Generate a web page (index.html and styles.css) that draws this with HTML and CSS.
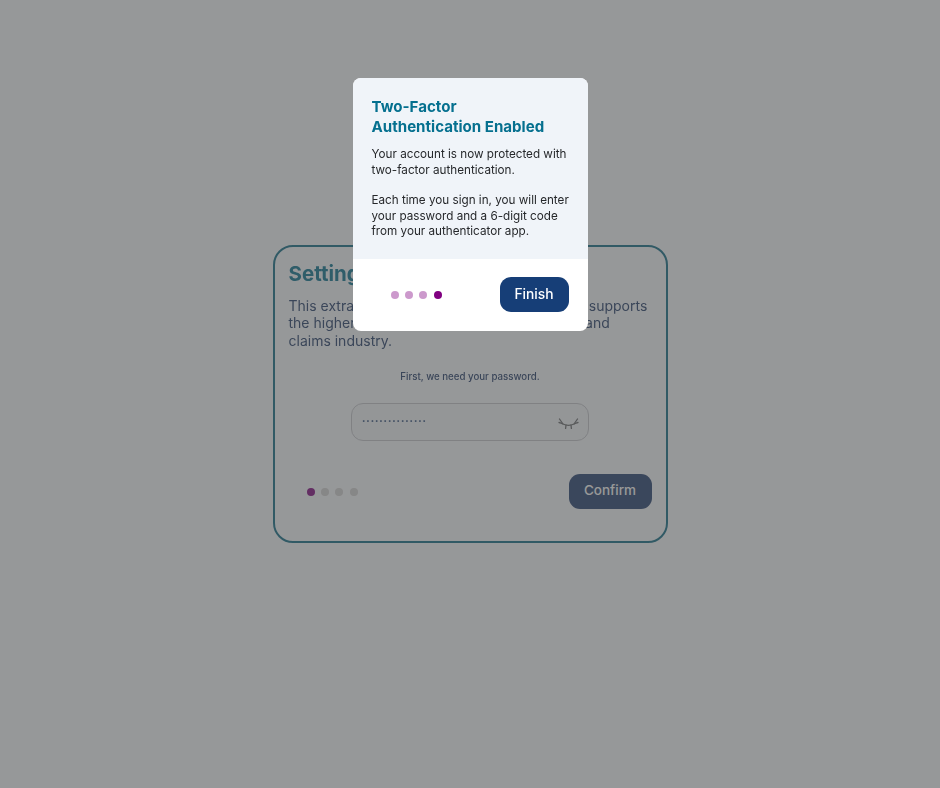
FILE: index.html
```html
<!DOCTYPE html>
<html lang="en">
<head>
<meta charset="utf-8">
<title>Two-Factor Authentication</title>
<link rel="stylesheet" href="styles.css">
</head>
<body>
<main class="page">
  <section class="card">
    <h1 class="card-title">Settings</h1>
    <p class="card-text">This extra layer of security protects data and supports the higher standards of the health insurance and claims industry.</p>
    <p class="card-note">First, we need your password.</p>
    <div class="field">
      <span class="field-dots">•••••••••••••••</span>
      <svg class="eye" viewBox="0 0 21 11" width="21" height="11" fill="none" stroke="#66686a" stroke-width="1.3" stroke-linecap="round"><path d="M1 4.5C3 5 4 5.5 5 6C8 7.4 13 7.4 16 6C17 5.5 18 5 20 4.5"/><path d="M1.5 1L5 6M19.5 1L16 6M8 7L7.6 10.5M13 7L13.4 10.5"/></svg>
    </div>
    <div class="card-foot">
      <div class="dots">
        <span class="dot dot-active"></span><span class="dot"></span><span class="dot"></span><span class="dot"></span>
      </div>
      <button class="btn btn-confirm">Confirm</button>
    </div>
  </section>
</main>
<div class="overlay">
  <section class="modal">
    <div class="modal-body">
      <h2 class="modal-title">Two-Factor<br>Authentication Enabled</h2>
      <p class="modal-text">Your account is now protected with two-factor authentication.</p>
      <p class="modal-text">Each time you sign in, you will enter your password and a 6-digit code from your authenticator app.</p>
    </div>
    <div class="modal-foot">
      <div class="dots">
        <span class="dot dot-light"></span><span class="dot dot-light"></span><span class="dot dot-light"></span><span class="dot dot-current"></span>
      </div>
      <button class="btn btn-finish">Finish</button>
    </div>
  </section>
</div>
</body>
</html>
```

FILE: styles.css
```css
* { box-sizing: border-box; }
html, body { margin: 0; height: 100%; }
body {
  background: #fbfdff;
  font-family: "Inter", "Liberation Sans", sans-serif;
  color: #1d3f72;
}
.page {
  height: 788px;
  display: flex;
  align-items: center;
  justify-content: center;
}
.card {
  width: 395px;
  height: 298px;
  border: 2px solid #0a6a85;
  border-radius: 20px;
  padding: 13px 14px 0;
  opacity: .7;
}
.card-title {
  margin: 0 0 9px;
  font-size: 20.5px;
  line-height: 28px;
  font-weight: 700;
  color: #05708f;
}
.card-text {
  margin: 0;
  font-size: 14px;
  line-height: 17.4px;
  color: #1f3a66;
}
.card-note {
  margin: 21px 0 0;
  text-align: center;
  font-size: 9.7px;
  line-height: 14px;
  font-weight: 500;
  color: #1f3a66;
}
.field {
  width: 238px;
  height: 38px;
  margin: 19px auto 0;
  border: 1px solid #c4c7cc;
  border-radius: 12px;
  background: #f5f8fb;
  padding: 0 9px 0 10px;
  display: flex;
  align-items: center;
  justify-content: space-between;
}
.field-dots {
  font-size: 6px;
  letter-spacing: .95px;
  margin-top: -3px;
}
.eye { margin-top: 3px; }
.card-foot {
  margin: 33px 0 0;
  display: flex;
  align-items: center;
  justify-content: space-between;
  padding-left: 18px;
}
.dots { display: flex; gap: 6.4px; }
.dot {
  width: 8px;
  height: 8px;
  border-radius: 50%;
  background: #d4d4d4;
}
.dot-active { background: #800080; }
.dot-light { background: #800080; opacity: .4; }
.dot-current { background: #800080; }
.btn {
  border: 0;
  border-radius: 11px;
  background: #163e77;
  color: #fff;
  font-family: inherit;
  font-weight: 500;
}
.btn-confirm {
  width: 83px;
  height: 35px;
  font-size: 13.5px;
  padding: 0 0 3px;
  background: #1f3d6d;
}
.overlay {
  position: fixed;
  inset: 0;
  background: rgba(0, 0, 0, .4);
  display: flex;
  flex-direction: column;
  align-items: center;
  padding-top: 78px;
}
.modal {
  width: 235px;
  height: 253px;
  background: #fff;
  border-radius: 8px;
  overflow: hidden;
}
.modal-body {
  height: 181px;
  background: #f0f4f9;
  padding: 19px 14px 0 19px;
}
.modal-title {
  margin: 0 0 11px;
  font-size: 15.1px;
  line-height: 19.5px;
  font-weight: 700;
  color: #05708f;
}
.modal-text {
  margin: 0 0 15px;
  font-size: 11.7px;
  line-height: 15.5px;
  color: #26282b;
}
.modal-foot {
  height: 72px;
  display: flex;
  align-items: center;
  justify-content: space-between;
  padding: 0 19px 1px 38px;
}
.btn-finish {
  width: 69px;
  height: 35px;
  font-size: 13.8px;
  padding: 0 0 2px;
}
```
